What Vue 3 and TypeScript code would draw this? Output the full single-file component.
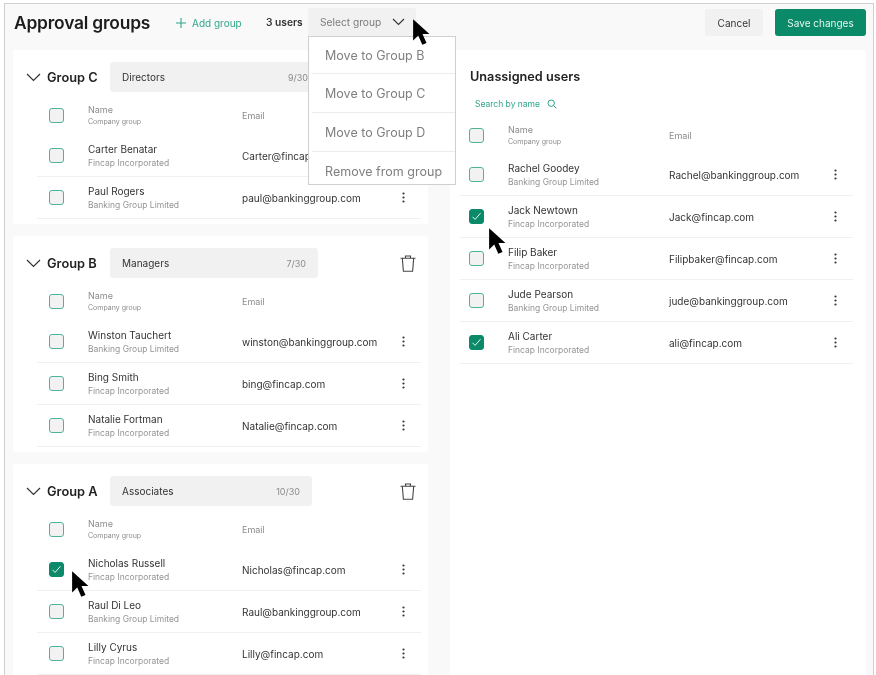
<script setup lang="ts">
interface Person { name: string; org: string; email: string; checked?: boolean; cursor?: boolean }
interface Group { title: string; label: string; count: string; boxWidth: number; people: Person[] }

const groups: Group[] = [
  { title: 'Group C', label: 'Directors', count: '9/30', boxWidth: 210, people: [
    { name: 'Carter Benatar', org: 'Fincap Incorporated', email: 'Carter@fincap.com' },
    { name: 'Paul Rogers', org: 'Banking Group Limited', email: 'paul@bankinggroup.com' },
  ] },
  { title: 'Group B', label: 'Managers', count: '7/30', boxWidth: 208, people: [
    { name: 'Winston Tauchert', org: 'Banking Group Limited', email: 'winston@bankinggroup.com' },
    { name: 'Bing Smith', org: 'Fincap Incorporated', email: 'bing@fincap.com' },
    { name: 'Natalie Fortman', org: 'Fincap Incorporated', email: 'Natalie@fincap.com' },
  ] },
  { title: 'Group A', label: 'Associates', count: '10/30', boxWidth: 202, people: [
    { name: 'Nicholas Russell', org: 'Fincap Incorporated', email: 'Nicholas@fincap.com', checked: true, cursor: true },
    { name: 'Raul Di Leo', org: 'Banking Group Limited', email: 'Raul@bankinggroup.com' },
    { name: 'Lilly Cyrus', org: 'Fincap Incorporated', email: 'Lilly@fincap.com' },
  ] },
]

const unassigned: Person[] = [
  { name: 'Rachel Goodey', org: 'Banking Group Limited', email: 'Rachel@bankinggroup.com' },
  { name: 'Jack Newtown', org: 'Fincap Incorporated', email: 'Jack@fincap.com', checked: true, cursor: true },
  { name: 'Filip Baker', org: 'Fincap Incorporated', email: 'Filipbaker@fincap.com' },
  { name: 'Jude Pearson', org: 'Banking Group Limited', email: 'jude@bankinggroup.com' },
  { name: 'Ali Carter', org: 'Fincap Incorporated', email: 'ali@fincap.com', checked: true },
]

const menu = ['Move to Group B', 'Move to Group C', 'Move to Group D', 'Remove from group']
const cursorPath = 'M1 1 L1 20 L5.6 15.6 L9.2 24 L13 22.3 L9.4 14.2 L15.6 14.2 Z'
</script>

<template>
  <div class="page">
    <div class="frame">
      <header class="topbar">
        <h1 class="title">Approval groups</h1>
        <div class="add">
          <svg width="12" height="12" viewBox="0 0 12 12"><path d="M6 1v10M1 6h10" stroke="#2fa68a" stroke-width="1.1" fill="none" /></svg>
          <span>Add group</span>
        </div>
        <span class="users">3 users</span>
        <div class="select">
          <span>Select group</span>
          <svg class="select-chev" width="13" height="8" viewBox="0 0 13 8"><path d="M1 1l5.5 5.5L12 1" stroke="#333" stroke-width="1.1" fill="none" /></svg>
          <svg class="cursor top-cursor" width="19" height="28" viewBox="0 0 17 25"><path :d="cursorPath" fill="#000" /></svg>
          <ul class="menu">
            <li v-for="item in menu" :key="item">{{ item }}</li>
          </ul>
        </div>
        <button class="btn cancel">Cancel</button>
        <button class="btn save">Save changes</button>
      </header>

      <div class="columns">
        <div class="left">
          <section v-for="g in groups" :key="g.title" class="card group">
            <div class="group-head">
              <svg class="chev" width="15" height="9" viewBox="0 0 15 9"><path d="M1 1l6.5 6.5L14 1" stroke="#333" stroke-width="1.2" fill="none" /></svg>
              <h2 class="group-title">{{ g.title }}</h2>
              <div class="group-box" :style="{ width: g.boxWidth + 'px' }">
                <span>{{ g.label }}</span>
                <span class="count">{{ g.count }}</span>
              </div>
              <svg class="trash" width="16" height="17" viewBox="0 0 16 17" fill="none" stroke="#444" stroke-width="1.1">
                <path d="M.5 3.2h15M5.5 3V1h5v2M2.3 3.2l1.1 13h9.2l1.1-13" />
              </svg>
            </div>
            <div class="row head">
              <span class="check"></span>
              <div class="who"><div class="hn">Name</div><div class="hc">Company group</div></div>
              <div class="he">Email</div>
            </div>
            <div v-for="p in g.people" :key="p.name" class="row line">
              <span class="check" :class="{ on: p.checked }">
                <svg v-if="p.checked" width="11" height="9" viewBox="0 0 11 9"><path d="M1.5 4.8l2.6 2.6 5.4-6.2" stroke="#fff" stroke-width="0.9" fill="none" /></svg>
                <svg v-if="p.cursor" class="cursor row-cursor" width="19" height="28" viewBox="0 0 17 25"><path :d="cursorPath" fill="#000" /></svg>
              </span>
              <div class="who"><div class="pn">{{ p.name }}</div><div class="po">{{ p.org }}</div></div>
              <div class="pe">{{ p.email }}</div>
              <svg class="kebab" width="3" height="11" viewBox="0 0 3 11"><circle cx="1.5" cy="1.5" r="1.1" /><circle cx="1.5" cy="5.5" r="1.1" /><circle cx="1.5" cy="9.5" r="1.1" /></svg>
            </div>
          </section>
        </div>

        <section class="card right">
          <h2 class="un-title">Unassigned users</h2>
          <div class="search">
            <span>Search by name</span>
            <svg width="10" height="10" viewBox="0 0 10 10" fill="none" stroke="#2fa68a" stroke-width="1"><circle cx="4.2" cy="4.2" r="3.2" /><path d="M6.6 6.6L9.4 9.4" /></svg>
          </div>
          <div class="row head">
            <span class="check"></span>
            <div class="who"><div class="hn">Name</div><div class="hc">Company group</div></div>
            <div class="he">Email</div>
          </div>
          <div v-for="p in unassigned" :key="p.name" class="row line">
            <span class="check" :class="{ on: p.checked }">
              <svg v-if="p.checked" width="11" height="9" viewBox="0 0 11 9"><path d="M1.5 4.8l2.6 2.6 5.4-6.2" stroke="#fff" stroke-width="0.9" fill="none" /></svg>
              <svg v-if="p.cursor" class="cursor row-cursor" width="19" height="28" viewBox="0 0 17 25"><path :d="cursorPath" fill="#000" /></svg>
            </span>
            <div class="who"><div class="pn">{{ p.name }}</div><div class="po">{{ p.org }}</div></div>
            <div class="pe">{{ p.email }}</div>
            <svg class="kebab" width="3" height="11" viewBox="0 0 3 11"><circle cx="1.5" cy="1.5" r="1.1" /><circle cx="1.5" cy="5.5" r="1.1" /><circle cx="1.5" cy="9.5" r="1.1" /></svg>
          </div>
        </section>
      </div>
    </div>
  </div>
</template>

<style>
html, body { margin: 0; background: #fff; overflow: hidden; }
</style>

<style scoped>
.page {
  height: 675px;
  overflow: hidden;
  padding: 3px 2px 0 4px;
  box-sizing: border-box;
  font-family: Inter, "Noto Sans", sans-serif;
  color: #2e2e2e;
}
.frame {
  height: 672px;
  box-sizing: border-box;
  border: 1px solid #cfcfcf;
  border-bottom: none;
  background: #f9f9f9;
  padding: 0 7px 0 8px;
  overflow: hidden;
  filter: blur(0.3px);
}
.topbar {
  height: 46px;
  box-sizing: border-box;
  padding-bottom: 9px;
  display: flex;
  align-items: center;
  position: relative;
}
.title {
  margin: 0;
  font-size: 17.4px;
  font-weight: 600;
  color: #1c1c1c;
  letter-spacing: -0.2px;
  width: 162px;
  flex: none;
  padding-left: 1px;
  box-sizing: border-box;
}
.add {
  display: flex;
  align-items: center;
  gap: 5px;
  font-size: 10px;
  color: #2fa68a;
  width: 91px;
  flex: none;
}
.users {
  font-size: 10.2px;
  font-weight: 600;
  width: 42px;
  flex: none;
  margin-top: -2px;
  color: #333;
}
.select {
  width: 108px;
  height: 28px;
  flex: none;
  background: #f1f1f1;
  border-radius: 3px 3px 0 0;
  display: flex;
  align-items: center;
  font-size: 10.2px;
  color: #7b7b7b;
  padding-left: 12px;
  box-sizing: border-box;
  position: relative;
  margin-top: -1px;
  z-index: 5;
}
.select-chev { position: absolute; left: 84px; top: 10px; }
.top-cursor { left: 104px; top: 10px; z-index: 7; }
.cursor { position: absolute; }
.menu {
  position: absolute;
  left: 0;
  top: 28px;
  width: 148px;
  height: 149px;
  box-sizing: border-box;
  margin: 0;
  padding: 0 0 0 3px;
  list-style: none;
  background: #fff;
  border: 1px solid #cfcfcf;
  font-size: 12.5px;
  letter-spacing: 0.02px;
  color: #7f7f7f;
  overflow: hidden;
}
.menu li {
  height: 39px;
  box-sizing: border-box;
  display: flex;
  align-items: center;
  padding-left: 13px;
  border-bottom: 1px solid #ececec;
}
.menu li:first-child { height: 37px; }
.menu li:last-child { border-bottom: none; }
.btn {
  height: 27px;
  border: none;
  border-radius: 3px;
  font-family: inherit;
  font-size: 10px;
  flex: none;
  padding: 0;
}
.cancel { width: 58px; background: #f1f1f1; color: #333; margin-left: auto; }
.save { width: 91px; background: #0b8a6a; color: #e6f5f0; margin-left: 12px; }
.columns {
  display: grid;
  grid-template-columns: 415px 416px;
  column-gap: 22px;
  align-items: start;
}
.left { display: flex; flex-direction: column; gap: 12px; }
.card { background: #fff; border-radius: 3px; }
.group { padding: 12px 7px 5px 24px; }
.group-head {
  display: flex;
  align-items: center;
  height: 30px;
  position: relative;
  margin-left: -12px;
}
.chev { margin-left: 1px; flex: none; }
.group-title {
  margin: 0 0 0 6px;
  font-size: 12.8px;
  font-weight: 600;
  width: 63px;
  flex: none;
  color: #222;
}
.group-box {
  height: 30px;
  background: #f1f1f1;
  border-radius: 3px;
  display: flex;
  align-items: center;
  justify-content: space-between;
  padding: 0 12px;
  box-sizing: border-box;
  font-size: 10px;
  color: #333;
}
.count { font-size: 9px; color: #8a8a8a; }
.trash { position: absolute; right: 5px; top: 7px; }
.row {
  display: flex;
  align-items: center;
  height: 42px;
  box-sizing: border-box;
  padding-left: 12px;
}
.head { height: 43px; padding-top: 3px; }
.head .who { margin-top: 1px; }
.left .row { width: 384px; }
.line { border-bottom: 1px solid #f0f0f0; }
.left .line .who { padding-top: 1px; }
.check {
  width: 15px;
  height: 15px;
  box-sizing: border-box;
  flex: none;
  border: 1.5px solid #4fb39a;
  border-radius: 3px;
  background: #f2f2f2;
  position: relative;
  display: flex;
  align-items: center;
  justify-content: center;
}
.check.on { background: #0b8a6a; border-color: #0b8a6a; }
.row-cursor { left: 21px; top: 7px; z-index: 3; }
.right .row-cursor { left: 18px; top: 17px; }
.who { margin-left: 24px; width: 154px; flex: none; }
.hn { font-size: 9px; color: #8c8c8c; line-height: 12px; }
.hc { font-size: 7px; color: #8c8c8c; line-height: 12px; }
.he { font-size: 9px; color: #8c8c8c; }
.pn { font-size: 10px; color: #333; line-height: 14px; }
.po { font-size: 8.5px; color: #949494; line-height: 14px; }
.pe { font-size: 10px; color: #333; flex: 1; }
.kebab { fill: #333; flex: none; margin-right: 16px; }
.right {
  height: 640px;
  padding: 0 13px 0 10px;
  box-sizing: border-box;
}
.right .row { padding-left: 9px; }
.right .head { height: 40px; padding-top: 2px; }
.right .who { width: 161px; }
.un-title {
  margin: 0;
  padding: 19px 0 0 10px;
  font-size: 12.7px;
  font-weight: 600;
  line-height: 16px;
  color: #222;
}
.search {
  display: flex;
  align-items: center;
  gap: 7px;
  font-size: 8.5px;
  color: #2fa68a;
  height: 16px;
  margin: 11px 0 2px 15px;
}
</style>
